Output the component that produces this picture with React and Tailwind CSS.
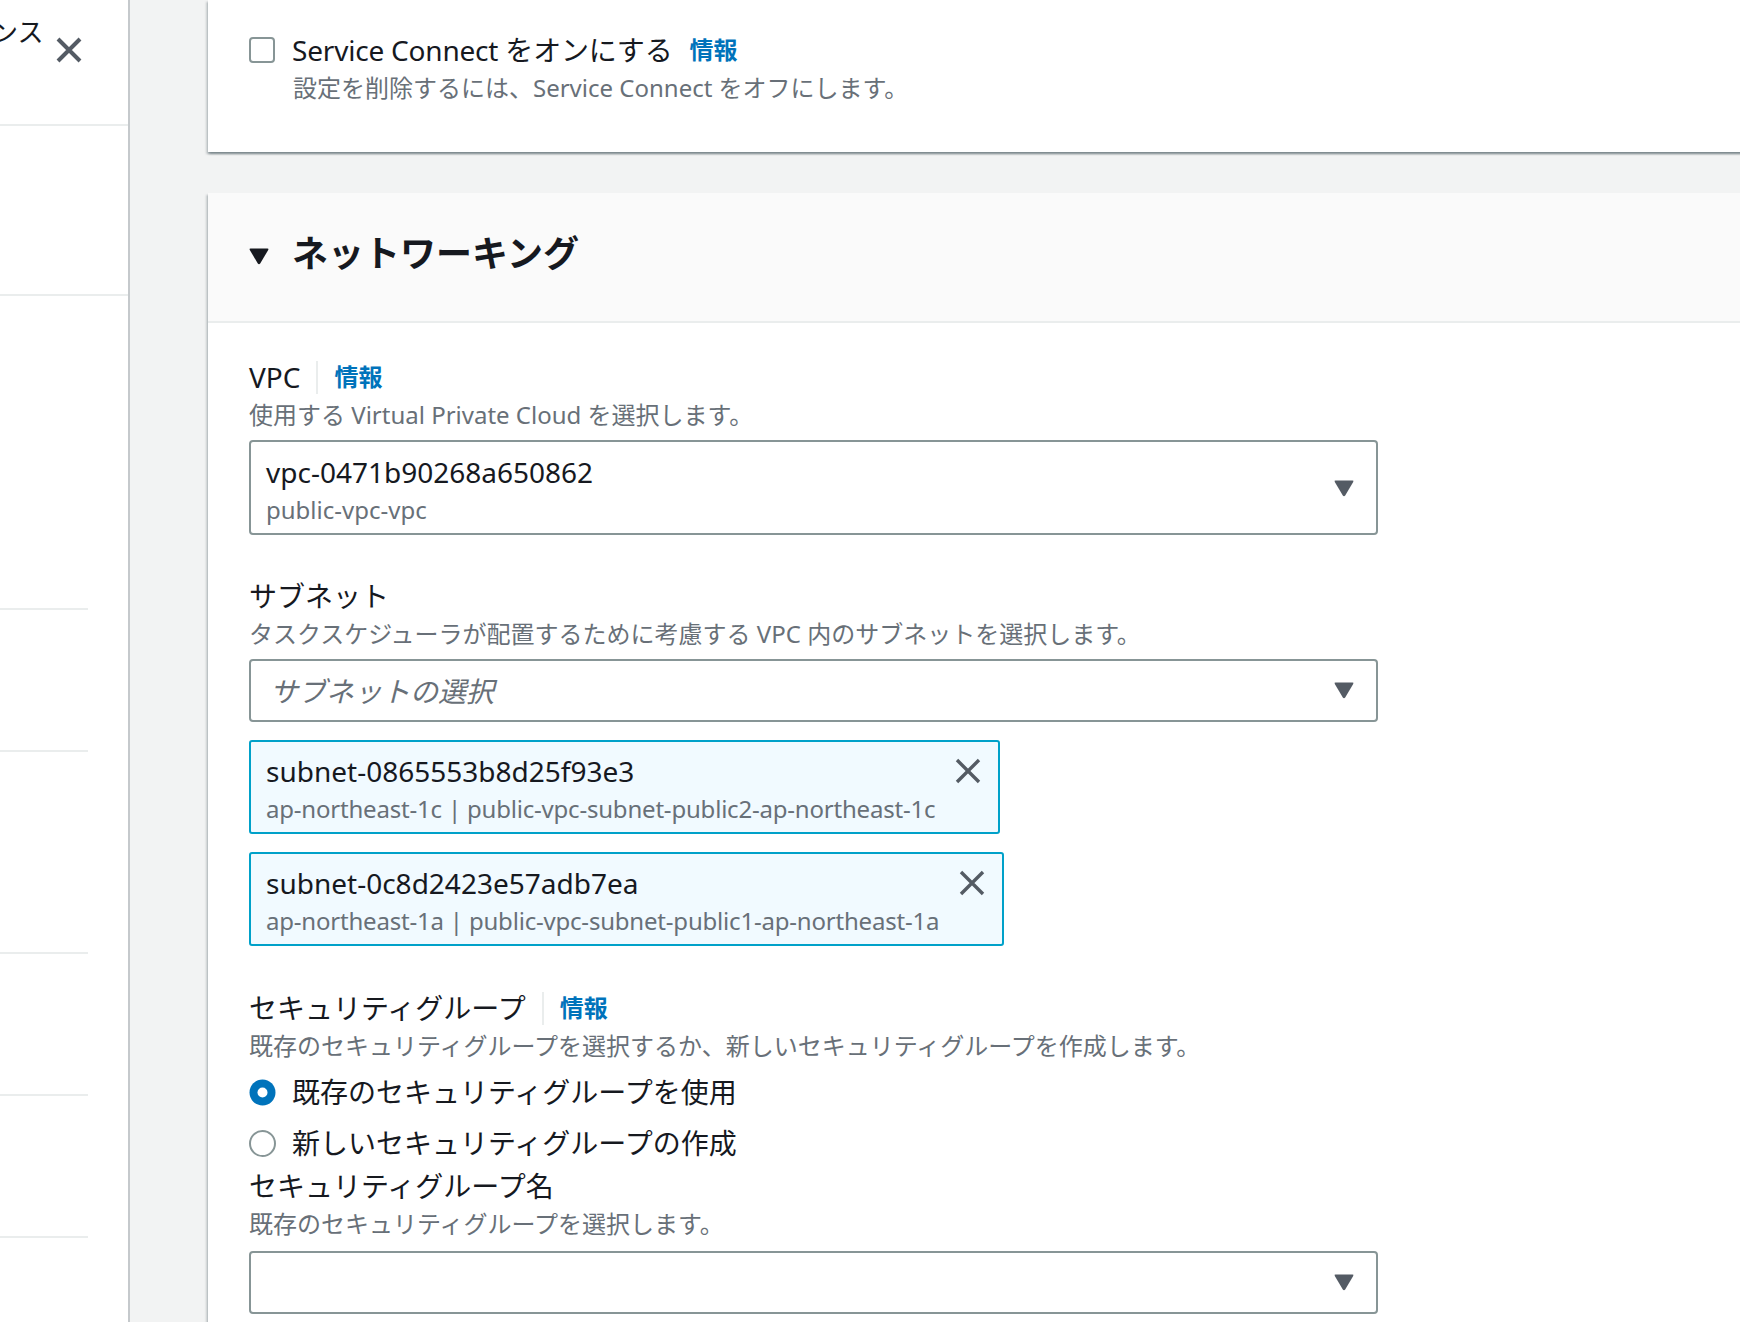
import React from "react";

const Caret = ({ color = "#545b64" }) => (
  <svg width="20" height="17" viewBox="0 0 20 17" className="shrink-0">
    <path d="M1.5 0.5 H18.5 Q20 0.5 19.2 1.9 L11.2 15.6 Q10 17 8.8 15.6 L0.8 1.9 Q0 0.5 1.5 0.5 Z" fill={color} />
  </svg>
);

const XIcon = ({ size = 26, stroke = 3 }) => (
  <svg width={size} height={size} viewBox="0 0 26 26" className="shrink-0">
    <path d="M2 2 L24 24 M24 2 L2 24" stroke="#545b64" strokeWidth={stroke} strokeLinecap="butt" fill="none" />
  </svg>
);

const Info = () => (
  <span className="ml-[16px] pl-[16px] border-l-2 border-[#eaeded] h-[33px] flex items-center text-[24px] font-bold text-[#0073bb]">
    情報
  </span>
);

const Token = ({ id, sub }) => (
  <div className="inline-flex items-start border-2 border-[#00a1c9] bg-[#f1faff] rounded-[3px] pl-[15px] pr-[17px] pt-[7px] pb-[7px]">
    <div className="flex flex-col">
      <span className="text-[28px] leading-[44px]">{id}</span>
      <span className="text-[24px] leading-[32px] text-[#687078] tracking-[-0.2px]">{sub}</span>
    </div>
    <div className="ml-[20px] mt-[9px]">
      <XIcon size={26} stroke={3.4} />
    </div>
  </div>
);

const Rule = () => <div className="w-[88px] h-[2px] bg-[#eaeded] shrink-0" />;

export default function App() {
  return (
    <div className="w-[1740px] h-[1322px] overflow-hidden flex bg-[#f2f3f3] text-[#16191f] font-['Noto_Sans','Noto_Sans_CJK_JP',sans-serif]">
      <aside className="w-[130px] shrink-0 bg-white border-r-2 border-[#c5c9cc] flex flex-col overflow-hidden">
        <div className="h-[126px] shrink-0 border-b-2 border-[#eaeded] flex items-start">
          <span className="-ml-[8px] mt-[14px] text-[26px] leading-[36px] whitespace-nowrap">ンス</span>
          <div className="ml-[13px] mt-[37px]">
            <XIcon size={26} stroke={4} />
          </div>
        </div>
        <div className="h-[170px] shrink-0 border-b-2 border-[#eaeded]" />
        <div className="h-[312px] shrink-0" />
        <Rule />
        <div className="h-[140px] shrink-0" />
        <Rule />
        <div className="h-[200px] shrink-0" />
        <Rule />
        <div className="h-[140px] shrink-0" />
        <Rule />
        <div className="h-[140px] shrink-0" />
        <Rule />
      </aside>

      <main className="flex-1 min-w-0 pl-[78px] -mr-[30px]">
        <section className="bg-white shadow-[0_2px_2px_0_rgba(0,28,36,0.3),2px_2px_2px_0_rgba(0,28,36,0.15),-2px_2px_2px_0_rgba(0,28,36,0.15)] pl-[41px] pt-[28px] pb-[48px]">
          <div className="flex items-center h-[44px]">
            <span className="w-[26px] h-[26px] rounded-[4px] border-2 border-[#879596] bg-white shrink-0" />
            <span className="ml-[17px] text-[28px] leading-[44px] tracking-[-0.2px]">Service Connect をオンにする</span>
            <span className="ml-[17px] text-[24px] font-bold text-[#0073bb]">情報</span>
          </div>
          <p className="pl-[44px] text-[24px] leading-[32px] text-[#687078]">
            設定を削除するには、Service Connect をオフにします。
          </p>
        </section>

        <section className="mt-[41px] bg-white min-h-[1200px] shadow-[0_2px_2px_0_rgba(0,28,36,0.3),2px_2px_2px_0_rgba(0,28,36,0.15),-2px_2px_2px_0_rgba(0,28,36,0.15)]">
          <div className="h-[130px] bg-[#fafafa] border-b-2 border-[#eaeded] pl-[41px] pt-[36px]">
            <div className="flex items-center h-[50px]">
              <div className="mt-[4px]">
                <Caret color="#16191f" />
              </div>
              <h2 className="ml-[23px] text-[36px] leading-[50px] font-bold">ネットワーキング</h2>
            </div>
          </div>

          <div className="pl-[41px] pt-[32px]">
            {/* VPC */}
            <div className="flex items-center h-[44px]">
              <span className="text-[28px] leading-[44px]">VPC</span>
              <Info />
            </div>
            <p className="text-[24px] leading-[32px] text-[#687078]">使用する Virtual Private Cloud を選択します。</p>
            <div className="mt-[9px] w-[1129px] h-[95px] border-2 border-[#879596] rounded-[4px] pl-[15px] pr-[22px] pt-[8px] pb-[7px] flex items-center justify-between">
              <div className="flex flex-col">
                <span className="text-[28px] leading-[44px]">vpc-0471b90268a650862</span>
                <span className="text-[24px] leading-[32px] text-[#687078]">public-vpc-vpc</span>
              </div>
              <Caret />
            </div>

            {/* Subnet */}
            <div className="mt-[39px] flex items-center h-[44px]">
              <span className="text-[28px] leading-[44px]">サブネット</span>
            </div>
            <p className="text-[24px] leading-[32px] text-[#687078]">
              タスクスケジューラが配置するために考慮する VPC 内のサブネットを選択します。
            </p>
            <div className="mt-[9px] w-[1129px] h-[63px] border-2 border-[#879596] rounded-[4px] pl-[19px] pr-[22px] flex items-center justify-between">
              <span className="text-[28px] leading-[44px] italic text-[#687078]">サブネットの選択</span>
              <Caret />
            </div>
            <div className="mt-[18px]">
              <Token id="subnet-0865553b8d25f93e3" sub="ap-northeast-1c | public-vpc-subnet-public2-ap-northeast-1c" />
            </div>
            <div className="mt-[18px]">
              <Token id="subnet-0c8d2423e57adb7ea" sub="ap-northeast-1a | public-vpc-subnet-public1-ap-northeast-1a" />
            </div>

            {/* Security group */}
            <div className="mt-[40px] flex items-center h-[44px]">
              <span className="text-[28px] leading-[44px]">セキュリティグループ</span>
              <Info />
            </div>
            <p className="text-[24px] leading-[32px] text-[#687078]">
              既存のセキュリティグループを選択するか、新しいセキュリティグループを作成します。
            </p>
            <div className="mt-[8px] flex items-center h-[44px]">
              <svg width="27" height="27" viewBox="0 0 27 27" className="shrink-0">
                <circle cx="13.5" cy="13.5" r="13" fill="#0073bb" />
                <circle cx="13.5" cy="13.5" r="5" fill="#ffffff" />
              </svg>
              <span className="ml-[16px] text-[28px] leading-[44px]">既存のセキュリティグループを使用</span>
            </div>
            <div className="mt-[7px] flex items-center h-[44px]">
              <span className="w-[27px] h-[27px] rounded-full border-2 border-[#879596] bg-white shrink-0" />
              <span className="ml-[16px] text-[28px] leading-[44px]">新しいセキュリティグループの作成</span>
            </div>
            <div className="-mt-[1px] flex items-center h-[44px]">
              <span className="text-[28px] leading-[44px]">セキュリティグループ名</span>
            </div>
            <p className="text-[24px] leading-[32px] text-[#687078]">既存のセキュリティグループを選択します。</p>
            <div className="mt-[11px] w-[1129px] h-[63px] border-2 border-[#879596] rounded-[4px] pl-[19px] pr-[22px] flex items-center justify-end">
              <Caret />
            </div>
          </div>
        </section>
      </main>
    </div>
  );
}
